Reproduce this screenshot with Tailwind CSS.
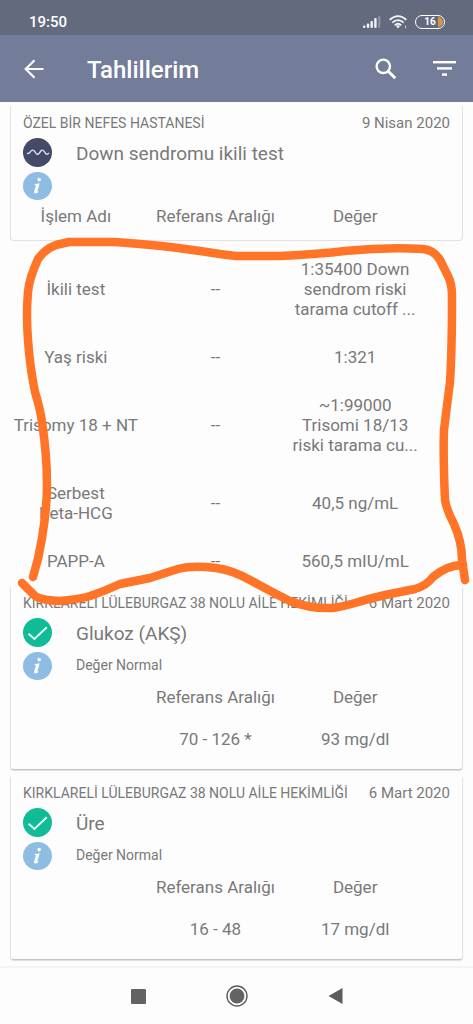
<!DOCTYPE html>
<html lang="tr">
<head>
<meta charset="utf-8">
<meta name="viewport" content="width=device-width, initial-scale=1">
<title>Tahlillerim</title>
<script src="https://cdn.jsdelivr.net/npm/@tailwindcss/browser@4"></script>
</head>
<body class="relative flex min-h-screen flex-col bg-[#fdfdfd] font-['Roboto',sans-serif] text-[#797979]">

<!-- Shared symbols -->
<svg class="hidden" aria-hidden="true">
  <symbol id="info" viewBox="0 0 29 28">
    <ellipse cx="14.5" cy="14" rx="14.5" ry="14" fill="#8fbce3"/>
    <circle cx="16.2" cy="7.6" r="1.8" fill="#fff"/>
    <path d="M11.3 12.2 L16.7 11.2 L14.4 19.2 Q14.2 20.3 16.2 19 Q14.4 21.8 12.2 21.6 Q10.6 21.3 11.2 19.2 L12.9 13.3 Q12.7 12.7 11.3 12.8 Z" fill="#fff"/>
  </symbol>
  <symbol id="check" viewBox="0 0 29 29">
    <circle cx="14.5" cy="14.5" r="14.5" fill="#10bb97"/>
    <path d="M5.6 15.8 L11.4 21 L23.8 9.3" fill="none" stroke="#e6fff8" stroke-width="1.9"/>
  </symbol>
</svg>

<div class="flex h-[35px] items-end justify-between bg-[#636a7d] pr-7 pb-[3px] pl-[29px] text-white">
  <span class="text-[15px] leading-5 font-medium">19:50</span>
  <div class="flex items-center gap-2 pb-[3px]">
    <svg class="h-3 w-[18px]" viewBox="0 0 18 12" fill="#f2f3f7" aria-hidden="true">
      <rect x="0" y="9.5" width="2.4" height="2.5" rx="1"/><rect x="3.8" y="7.5" width="2.4" height="4.5" rx="1"/><rect x="7.5" y="5" width="2.4" height="7" rx="1"/><rect x="11.2" y="2" width="2.4" height="10" rx="1"/><rect x="15.2" y="0" width="2.2" height="12" rx="1" opacity=".3"/>
    </svg>
    <svg class="h-3.5 w-[18px]" viewBox="0 0 18 14" fill="none" stroke="#f5f6fa" stroke-width="1.8" aria-hidden="true">
      <path d="M.7 4.7 Q9 -2.5 17.3 4.7"/><path d="M3.3 7.6 Q9 2.6 14.7 7.6"/><path d="M5.8 10.2 Q9 7.4 12.2 10.2"/><path d="M7 11 L9 13.4 L11 11 Q9 9.6 7 11Z" fill="#f5f6fa" stroke="none"/><path d="M16.6 10.5v3" stroke-width="1" opacity=".7"/>
    </svg>
    <div class="relative flex h-3.5 w-[30px] items-center justify-center overflow-hidden rounded-full border border-white">
      <span class="text-[10px] leading-3 font-bold">16</span>
      <span class="absolute inset-y-px right-px w-[5px] rounded-r-full bg-[#d9963a]"></span>
    </div>
  </div>
</div>

<header class="flex h-[67px] items-center bg-[#737c98] pr-[17px] pl-6 text-white">
  <button type="button" aria-label="Geri">
    <svg class="h-5 w-5" viewBox="0 0 20 20" fill="none" stroke="#fff" stroke-width="2.2"><path d="M19.5 10H2M10.5 1.2 L1.7 10 L10.5 18.8"/></svg>
  </button>
  <h1 class="ml-[43px] flex-1 pt-0.5 text-2xl font-medium">Tahlillerim</h1>
  <button type="button" aria-label="Ara">
    <svg class="h-[22px] w-[22px]" viewBox="0 0 22 22" fill="none" stroke="#fff" stroke-width="2.4"><circle cx="8.3" cy="8.3" r="6.7"/><path d="M13 13 L20.3 20.3" stroke-width="3"/></svg>
  </button>
  <button type="button" aria-label="Filtrele" class="ml-9">
    <svg class="h-[15px] w-[23px]" viewBox="0 0 23 15" fill="#fff"><rect x="0" y="0" width="23" height="2.4"/><rect x="4" y="6.2" width="15" height="2.4"/><rect x="9" y="12.4" width="5" height="2.4"/></svg>
  </button>
</header>

<main class="flex-1 px-2.5 pt-1">
  <section class="rounded-b-sm border border-t-0 border-[#e2e2e2] px-3 pt-[7px] pb-3">
    <div class="flex justify-between text-[15px] leading-5"><span class="text-sm leading-5">ÖZEL BİR NEFES HASTANESİ</span><time datetime="2020-04-09">9 Nisan 2020</time></div>
    <div class="mt-[5px] flex gap-6">
      <div class="flex flex-col gap-[5px]">
        <svg class="h-[29px] w-[29px]" viewBox="0 0 29 29" aria-hidden="true"><circle cx="14.5" cy="14.5" r="14.5" fill="#454a67"/><path d="M4 15.2 Q5.2 16 6.5 14.8 Q9.5 10.2 11.7 13.5 Q14.3 18.5 16.7 14.6 Q19.3 10.2 21.3 13.5 Q23.3 18 26 15" fill="none" stroke="#dfe4f7" stroke-width="1.4"/></svg>
        <svg class="h-7 w-[29px]" role="img" aria-label="Bilgi"><use href="#info"/></svg>
      </div>
      <h2 class="pt-0.5 text-[19px] leading-7">Down sendromu ikili test</h2>
    </div>
    <table class="-ml-[17px] mt-1 w-[calc(100%-8px)] table-fixed text-center text-[17px] leading-6">
      <thead><tr><th class="font-normal">İşlem Adı</th><th class="font-normal">Referans Aralığı</th><th class="font-normal">Değer</th></tr></thead>
    </table>
  </section>

  <div class="relative -mx-2.5 pt-1 pr-[48px] pb-0.5 pl-[6px]">
    <table aria-label="Down sendromu ikili test" class="w-full table-fixed text-center text-[17px] leading-5">
      <tbody>
        <tr><th scope="row" class="py-3.5 font-normal">İkili test</th><td>--</td><td class="py-3.5">1:35400 Down<br>sendrom riski<br>tarama cutoff ...</td></tr>
        <tr><th scope="row" class="py-3.5 font-normal">Yaş riski</th><td>--</td><td>1:321</td></tr>
        <tr><th scope="row" class="py-3.5 font-normal">Trisomy 18 + NT</th><td>--</td><td class="py-3.5">~1:99000<br>Trisomi 18/13<br>riski tarama cu...</td></tr>
        <tr><th scope="row" class="py-3.5 font-normal">Serbest<br>Beta-HCG</th><td>--</td><td>40,5 ng/mL</td></tr>
        <tr><th scope="row" class="py-3.5 font-normal">PAPP-A</th><td>--</td><td>560,5 mIU/mL</td></tr>
      </tbody>
    </table>
    <!-- Hand-drawn marker around the results -->
    <svg class="pointer-events-none absolute inset-0 z-10 h-full w-full overflow-visible" viewBox="0 241 473 346" preserveAspectRatio="none" fill="none" stroke="#ff7426" stroke-width="8.5" stroke-linecap="round" stroke-linejoin="round" aria-hidden="true">
      <path d="M33 577 Q39 558 42 538 Q47 508 47 485 Q47 455 42 422 Q40 408 35 392 Q30 368 28 340 Q26 315 28 292 Q29 279 38 259 Q45 249 56 245 L69 242 L115 242 Q160 245 200 251 Q225 255 236 256 L280 256 Q320 254 345 251 Q385 247 423 249 Q434 250 440 260 L448 276 Q452 284 452 296 Q452 350 450 382 Q447 405 444 430 Q443 455 445 500 Q447 511 454 524 Q462 542 462 560 L465 580"/>
      <path d="M22 583 L34 595 Q39 600 60 601 Q80 599 90 596 Q105 591 120 584 Q135 581 150 578 Q165 573 178 569 Q192 565 216 568 Q232 570 250 580 Q275 594 290 601 Q310 609 333 608 Q345 606 355 603 Q375 597 390 594 L415 589 Q426 586 433 577 Q447 565 463 565"/>
    </svg>
  </div>

  <section class="rounded-b-sm border border-t-0 border-b-[#c4c4c4] border-x-[#e2e2e2] px-3 pt-1.5 pb-[18px] shadow-[0_1px_1px_#dedede]">
    <div class="flex justify-between text-[15px] leading-5"><span class="text-sm leading-5 whitespace-nowrap">KIRKLARELİ LÜLEBURGAZ 38 NOLU AİLE HEKİMLİĞİ</span><time datetime="2020-03-06" class="whitespace-nowrap">6 Mart 2020</time></div>
    <div class="mt-[5px] flex gap-6">
      <div class="flex flex-col gap-[5px]">
        <svg class="h-[29px] w-[29px]" role="img" aria-label="Normal"><use href="#check"/></svg>
        <svg class="h-7 w-[29px]" role="img" aria-label="Bilgi"><use href="#info"/></svg>
      </div>
      <div><h2 class="pt-0.5 text-[19px] leading-7">Glukoz (AKŞ)</h2><p class="mt-[7px] text-sm leading-5">Değer Normal</p></div>
    </div>
    <table class="-ml-[17px] mt-[5px] w-[calc(100%-8px)] table-fixed text-center text-[17px] leading-6">
      <thead><tr><td></td><th class="font-normal">Referans Aralığı</th><th class="font-normal">Değer</th></tr></thead>
      <tbody><tr><td></td><td class="pt-[18px]">70 - 126 *</td><td class="pt-[18px]">93 mg/dl</td></tr></tbody>
    </table>
  </section>

  <section class="mt-[7px] rounded-b-sm border border-t-0 border-b-[#c4c4c4] border-x-[#e2e2e2] px-3 pt-1.5 pb-[18px] shadow-[0_1px_1px_#dedede]">
    <div class="flex justify-between text-[15px] leading-5"><span class="text-sm leading-5 whitespace-nowrap">KIRKLARELİ LÜLEBURGAZ 38 NOLU AİLE HEKİMLİĞİ</span><time datetime="2020-03-06" class="whitespace-nowrap">6 Mart 2020</time></div>
    <div class="mt-[5px] flex gap-6">
      <div class="flex flex-col gap-[5px]">
        <svg class="h-[29px] w-[29px]" role="img" aria-label="Normal"><use href="#check"/></svg>
        <svg class="h-7 w-[29px]" role="img" aria-label="Bilgi"><use href="#info"/></svg>
      </div>
      <div><h2 class="pt-0.5 text-[19px] leading-7">Üre</h2><p class="mt-[7px] text-sm leading-5">Değer Normal</p></div>
    </div>
    <table class="-ml-[17px] mt-[5px] w-[calc(100%-8px)] table-fixed text-center text-[17px] leading-6">
      <thead><tr><td></td><th class="font-normal">Referans Aralığı</th><th class="font-normal">Değer</th></tr></thead>
      <tbody><tr><td></td><td class="pt-[18px]">16 - 48</td><td class="pt-[18px]">17 mg/dl</td></tr></tbody>
    </table>
  </section>
</main>

<nav class="flex h-[58px] items-center justify-center gap-20 border-t-2 border-[#f4f4f4]" aria-label="Sistem">
  <button type="button" aria-label="Son uygulamalar"><svg class="h-[15px] w-[15px]" viewBox="0 0 15 15"><rect width="15" height="15" rx="1" fill="#636363"/></svg></button>
  <button type="button" aria-label="Ana ekran"><svg class="h-[22px] w-[22px]" viewBox="0 0 22 22"><circle cx="11" cy="11" r="10" fill="none" stroke="#5c5c5c" stroke-width="1.4"/><circle cx="11" cy="11" r="7.4" fill="#636363"/></svg></button>
  <button type="button" aria-label="Geri"><svg class="h-4 w-[15px]" viewBox="0 0 15 16"><path d="M14.5 0V16L.5 8Z" fill="#5c5c5c"/></svg></button>
</nav>
</body>
</html>
